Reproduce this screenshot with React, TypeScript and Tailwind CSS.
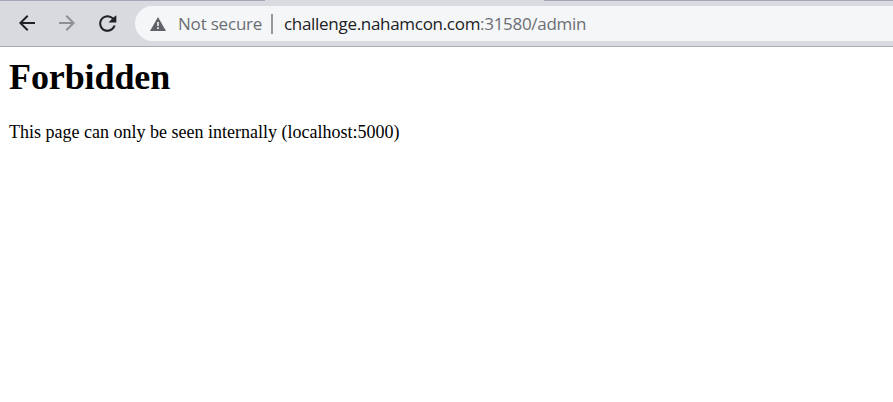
import React from "react";

function BackIcon() {
  return (
    <svg className="h-6 w-6 text-[#202124]" viewBox="0 0 24 24" fill="currentColor">
      <path d="M20 11H7.83l5.59-5.59L12 4l-8 8 8 8 1.41-1.41L7.83 13H20v-2z" />
    </svg>
  );
}

function ForwardIcon() {
  return (
    <svg className="h-6 w-6 text-[#8e8f94]" viewBox="0 0 24 24" fill="currentColor">
      <path d="M4 11h12.17l-5.59-5.59L12 4l8 8-8 8-1.41-1.41L16.17 13H4v-2z" />
    </svg>
  );
}

function ReloadIcon() {
  return (
    <svg className="h-[25px] w-[25px] text-[#202124]" viewBox="0 0 24 24" fill="currentColor">
      <path d="M17.65 6.35C16.2 4.9 14.21 4 12 4c-4.42 0-7.99 3.58-7.99 8s3.57 8 7.99 8c3.73 0 6.84-2.55 7.73-6h-2.08c-.82 2.33-3.04 4-5.65 4-3.31 0-6-2.69-6-6s2.69-6 6-6c1.66 0 3.14.69 4.22 1.78L13 11h7.5V4z" />
    </svg>
  );
}

function WarningIcon() {
  return (
    <svg className="h-[14px] w-4" viewBox="0 0 16 14">
      <path d="M8 0l8 14H0z" fill="#5f6368" />
      <path d="M7.2 5h1.6v4H7.2zM7.2 10.2h1.6v1.7H7.2z" fill="#f5f6f8" />
    </svg>
  );
}

export default function App() {
  return (
    <div className="h-[402px] w-[893px] overflow-hidden bg-white">
      <header className="flex h-[47px] flex-col border-b border-[#a9a9ae] bg-[#d9dae0]">
        <div className="flex h-px shrink-0 justify-between">
          <span className="w-[265px] bg-[#a5a6ba]" />
          <span className="w-[349px] bg-[#a5a6ba]" />
        </div>
        <div className="flex h-[45px] items-center pl-[15px]">
          <div className="flex w-[120px] items-center gap-4 pb-px">
            <BackIcon />
            <ForwardIcon />
            <ReloadIcon />
          </div>
          <div className="flex h-[35px] flex-1 items-center rounded-l-full bg-[#f5f6f8] pl-[15px] font-['Open_Sans',sans-serif] text-[17px] whitespace-nowrap">
            <WarningIcon />
            <span className="ml-3 w-[93px] tracking-[-0.2px] text-[#6b6e73]">Not secure</span>
            <span className="h-5 w-[2px] bg-[#96989c]" />
            <span className="ml-[11px] tracking-[-0.3px] text-[#202124]">
              challenge.nahamcon.com<span className="text-[#6b6e73]">:31580/admin</span>
            </span>
          </div>
        </div>
      </header>
      <main className="px-[9px] pt-[10px] font-['Liberation_Serif',serif] text-black">
        <h1 className="text-[36px] leading-[40px] font-bold tracking-[-0.1px]">Forbidden</h1>
        <p className="mt-[25px] text-[18px] leading-5">This page can only be seen internally (localhost:5000)</p>
      </main>
    </div>
  );
}
